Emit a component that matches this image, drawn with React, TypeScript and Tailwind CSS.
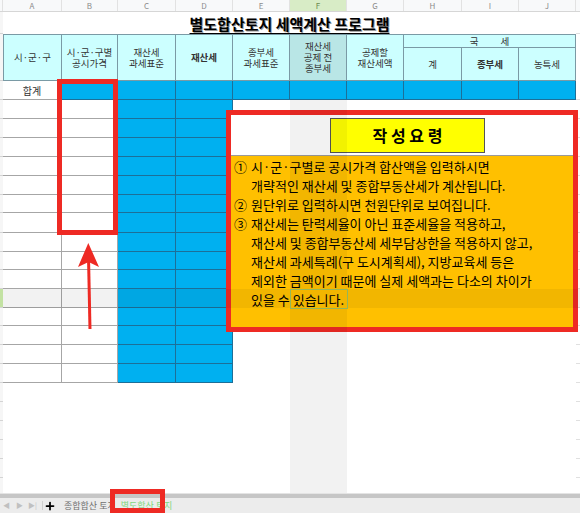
import React from 'react';
import { Plus } from 'lucide-react';

const GRID = 'grid grid-cols-[3px_59px_56px_58px_57px_57px_57px_57px_58px_57px_57px_4px]';
const LETTERS = ['A', 'B', 'C', 'D', 'E', 'F', 'G', 'H', 'I', 'J'];

const ROW_H: Record<number, string> = {
  18: 'h-[18px]',
  19: 'h-[19px]',
  20: 'h-[20px]',
};
const DATA_ROWS = [19, 19, 19, 19, 19, 18, 20, 19, 18, 19, 19, 18, 19, 19, 19];
const SELECTED_ROW = 10;

const head =
  'bg-[#ccffff] border-r border-b border-[#7a9aa5] flex items-center justify-center text-center text-[9.5px] leading-[11px] text-[#333]';
const blue = 'bg-[#00b0f0] border-r border-b border-[#1d6f98]';
const plain = 'bg-white border-r border-b border-[#a6a6a6]';

function Strip({ selected = false }: { selected?: boolean }) {
  return (
    <div
      className={
        selected
          ? 'bg-[#c3e2a3] border-b border-[#d4d4d4]'
          : 'bg-[#f6f6f6] border-b border-[#d4d4d4]'
      }
    />
  );
}

function Tail() {
  return <div className="border-b border-[#e0e0e0]" />;
}

export default function App() {
  return (
    <div className="relative w-[580px] h-[513px] overflow-hidden bg-white font-['Noto_Sans_CJK_KR','Noto_Sans',sans-serif]">
      {/* ---------------- SHEET ---------------- */}
      <div className="h-[493px] overflow-hidden">
        {/* column letters */}
        <div className={`${GRID} h-[12px] bg-[#f8f9fa] border-b border-[#d6d6d6]`}>
          <div className="border-r border-[#e2e2e2]" />
          {LETTERS.map(l => (
            <div
              key={l}
              className={
                l === 'F'
                  ? 'flex items-center justify-center bg-[#d8ecc6] border-r border-[#e2e2e2] text-[8px] leading-none text-[#6b8a4e]'
                  : 'flex items-center justify-center border-r border-[#e2e2e2] text-[8px] leading-none text-[#8c8c8c]'
              }
            >
              {l}
            </div>
          ))}
          <div />
        </div>

        {/* title */}
        <div className={`${GRID} h-[22px]`}>
          <Strip />
          <div className="col-span-10 flex items-center justify-center">
            <span className="text-[15px] font-bold leading-none text-black underline underline-offset-[3px] [text-shadow:1px_1px_0_#9a9a9a]">
              별도합산토지 세액계산 프로그램
            </span>
          </div>
          <Tail />
        </div>

        {/* header */}
        <div className={`${GRID} grid-rows-[14px_33px]`}>
          <div className="row-span-2 bg-[#f6f6f6] border-b border-[#d4d4d4]" />
          <div className={`${head} row-span-2 border-t border-l`}>시·군·구</div>
          <div className={`${head} row-span-2 border-t`}>
            시·군·구별
            <br />
            공시가격
          </div>
          <div className={`${head} row-span-2 border-t`}>
            재산세
            <br />
            과세표준
          </div>
          <div className={`${head} row-span-2 border-t font-bold`}>재산세</div>
          <div className={`${head} row-span-2 border-t`}>
            종부세
            <br />
            과세표준
          </div>
          <div className={`${head} row-span-2 border-t !bg-[#b9e6e6]`}>
            재산세
            <br />
            공제 전
            <br />
            종부세
          </div>
          <div className={`${head} row-span-2 border-t`}>
            공제할
            <br />
            재산세액
          </div>
          <div className={`${head} col-span-3 border-t gap-[22px]`}>
            <span>국</span>
            <span>세</span>
          </div>
          <div className="row-span-2" />
          <div className={head}>계</div>
          <div className={`${head} font-bold`}>종부세</div>
          <div className={head}>농특세</div>
        </div>

        {/* total */}
        <div className={`${GRID} h-[19px]`}>
          <Strip />
          <div className={`${plain} flex items-center justify-center text-[10px] text-[#333]`}>
            합계
          </div>
          {LETTERS.slice(1).map(l => (
            <div key={l} className={blue} />
          ))}
          <Tail />
        </div>

        {/* data rows */}
        {DATA_ROWS.map((h, i) => (
          <div key={i} className={`${GRID} ${ROW_H[h]}`}>
            <Strip selected={i === SELECTED_ROW} />
            <div className={plain} />
            <div className={plain} />
            <div className={blue} />
            <div className={blue} />
            <div className="col-span-6" />
            <Tail />
          </div>
        ))}

        {/* empty rows */}
        {[0, 1, 2, 3, 4, 5].map(i => (
          <div key={i} className={`${GRID} h-[19px]`}>
            <Strip />
            <div className="col-span-10" />
            <Tail />
          </div>
        ))}
      </div>

      {/* ---------------- SHEET TABS ---------------- */}
      <div className="h-[5px] bg-[#c6c6c6] border-t border-[#e4e4e4]" />
      <div className="h-[15px] bg-[#ececec] flex items-center text-[9px] leading-[11px]">
        <span className="w-[13px] text-center text-[7px] leading-[9px] text-[#c0c0c0]">◀</span>
        <span className="w-[13px] text-center text-[7px] leading-[9px] text-[#c0c0c0]">▶</span>
        <span className="w-[13px] text-center text-[7px] leading-[9px] text-[#c0c0c0]">▶|</span>
        <span className="w-[1px] h-[9px] bg-[#d0d0d0] ml-[3px]" />
        <span className="w-[14px] flex justify-center">
          <Plus className="w-[12px] h-[12px] text-black" strokeWidth={3.5} />
        </span>
        <span className="ml-[7px] text-[#707070]">종합합산 토지</span>
        <span className="ml-[5px] text-[#7fd77f]">별도합산 토지</span>
      </div>

      {/* ---------------- INSTRUCTION BOX ---------------- */}
      <div className="absolute left-[226px] top-[110px] w-[352px] h-[222px] border-[5px] border-[#ee2a24] bg-[#ffc000] flex flex-col">
        <div className="h-[41px] bg-white border-b border-[#9a9a9a] flex items-center justify-center pl-[11px]">
          <div className="w-[155px] h-[35px] bg-[#ffff00] border border-[#555] flex items-center justify-center text-[16px] font-bold text-black">
            작 성 요 령
          </div>
        </div>
        <div className="pl-[3px] pt-[1px] text-[13px] leading-[19px] text-black">
          <div className="flex">
            <span className="w-[17px] shrink-0">①</span>
            <div>
              시·군·구별로 공시가격 합산액을 입력하시면
              <br />
              개략적인 재산세 및 종합부동산세가 계산됩니다.
            </div>
          </div>
          <div className="flex">
            <span className="w-[17px] shrink-0">②</span>
            <div>원단위로 입력하시면 천원단위로 보여집니다.</div>
          </div>
          <div className="flex">
            <span className="w-[17px] shrink-0">③</span>
            <div className="whitespace-nowrap">
              재산세는 탄력세율이 아닌 표준세율을 적용하고,
              <br />
              재산세 및 종합부동산세 세부담상한을 적용하지 않고,
              <br />
              재산세 과세특례(구 도시계획세), 지방교육세 등은
              <br />
              제외한 금액이기 때문에 실제 세액과는 다소의 차이가
              <br />
              있을 수 있습니다.
            </div>
          </div>
        </div>
      </div>

      {/* ---------------- SELECTION SHADING ---------------- */}
      <div className="pointer-events-none absolute left-[290px] top-[100px] w-[57px] h-[189px] bg-black/[0.05]" />
      <div className="pointer-events-none absolute left-[290px] top-[308px] w-[57px] h-[185px] bg-black/[0.05]" />
      <div className="pointer-events-none absolute left-[3px] top-[289px] w-[287px] h-[19px] bg-black/[0.05]" />
      <div className="pointer-events-none absolute left-[347px] top-[289px] w-[233px] h-[19px] bg-black/[0.05]" />
      <div className="pointer-events-none absolute left-[290px] top-[289px] w-[58px] h-[20px] border border-[#93b65a] bg-black/[0.05]" />

      {/* ---------------- ANNOTATIONS ---------------- */}
      <div className="pointer-events-none absolute left-[57px] top-[79px] w-[61px] h-[156px] border-[5px] border-[#ee2a24]" />
      <svg
        className="pointer-events-none absolute left-[76px] top-[240px]"
        width="26"
        height="92"
        viewBox="0 0 26 92"
      >
        <line x1="12.6" y1="22" x2="14" y2="89" stroke="#ee2a24" strokeWidth="3" />
        <polygon points="12.3,3 23,27 12.6,22 2,27" fill="#ee2a24" />
      </svg>
      <div className="pointer-events-none absolute left-[110px] top-[489px] w-[55px] h-[24px] border-[5px] border-[#ee2a24]" />
    </div>
  );
}
